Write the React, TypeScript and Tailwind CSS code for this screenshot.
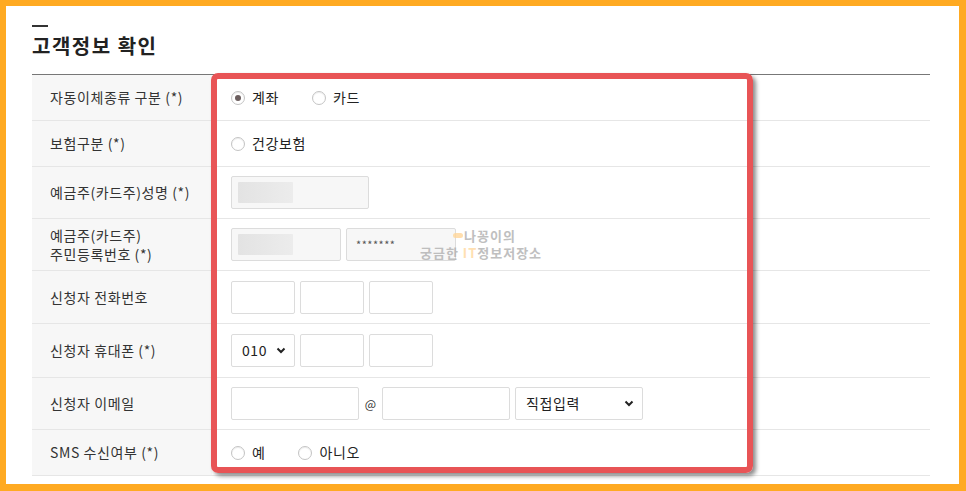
const FONT = { fontFamily: '"Noto Sans CJK KR", "Noto Sans", sans-serif' }

function Radio({ checked, label, gap }: { checked?: boolean; label: string; gap?: string }) {
  return (
    <label className={`flex items-center ${gap ?? ""}`}>
      <span className="w-[14px] h-[14px] rounded-full border border-[#c4c4c4] bg-white shadow-[inset_0_1px_1px_rgba(0,0,0,0.08)] flex items-center justify-center">
        {checked && <span className="w-[6px] h-[6px] rounded-full bg-[#6b5e5e]" />}
      </span>
      <span className="ml-[7px] text-[14px] tracking-[0.6px] text-[#222]">{label}</span>
    </label>
  )
}

function Input({ w, gray, children }: { w: string; gray?: boolean; children?: React.ReactNode }) {
  return (
    <div
      className={`${w} h-[33px] border border-[#dcdcdc] rounded-[2px] flex items-center ${
        gray ? "bg-[#f7f7f7]" : "bg-white"
      }`}
    >
      {children}
    </div>
  )
}

function Select({ w, value }: { w: string; value: string }) {
  return (
    <div className={`${w} h-[33px] border border-[#dcdcdc] rounded-[2px] bg-white flex items-center justify-between pl-[10px] pr-[8px]`}>
      <span className="text-[14px] tracking-[0.6px] text-[#222]">{value}</span>
      <svg width="10" height="7" viewBox="0 0 10 7">
        <path d="M1.5 1.5 L5 5 L8.5 1.5" fill="none" stroke="#222" strokeWidth="2" />
      </svg>
    </div>
  )
}

const Blur = () => <div className="ml-[6px] w-[55px] h-[21px] bg-[linear-gradient(90deg,#e3e3e3,#ececec)] rounded-[1px]" />

export default function App() {
  // 행 정보: 라벨, 높이, 내용
  const rows: { label: React.ReactNode; h: string; content: React.ReactNode }[] = [
    {
      label: "자동이체종류 구분 (*)",
      h: "h-[46px]",
      content: (
        <div className="flex items-center">
          <Radio checked label="계좌" />
          <Radio label="카드" gap="ml-[33px]" />
        </div>
      ),
    },
    { label: "보험구분 (*)", h: "h-[46px]", content: <Radio label="건강보험" /> },
    {
      label: "예금주(카드주)성명 (*)",
      h: "h-[52px]",
      content: (
        <Input w="w-[138px]" gray>
          <Blur />
        </Input>
      ),
    },
    {
      label: (
        <div className="leading-[19px]">
          예금주(카드주)
          <br />
          주민등록번호 (*)
        </div>
      ),
      h: "h-[52px]",
      content: (
        <div className="flex gap-[5px]">
          <Input w="w-[110px]" gray>
            <Blur />
          </Input>
          <Input w="w-[110px]" gray>
            <span className="ml-[9px] text-[11px] text-[#555] tracking-[0.5px]">*******</span>
          </Input>
        </div>
      ),
    },
    {
      label: "신청자 전화번호",
      h: "h-[53px]",
      content: (
        <div className="flex gap-[5px]">
          <Input w="w-[64px]" />
          <Input w="w-[64px]" />
          <Input w="w-[64px]" />
        </div>
      ),
    },
    {
      label: "신청자 휴대폰 (*)",
      h: "h-[54px]",
      content: (
        <div className="flex gap-[5px]">
          <Select w="w-[64px]" value="010" />
          <Input w="w-[64px]" />
          <Input w="w-[64px]" />
        </div>
      ),
    },
    {
      label: "신청자 이메일",
      h: "h-[52px]",
      content: (
        <div className="flex items-center">
          <Input w="w-[128px]" />
          <span className="w-[23px] text-center text-[12px] text-[#333]">@</span>
          <Input w="w-[128px]" />
          <div className="ml-[5px]">
            <Select w="w-[128px]" value="직접입력" />
          </div>
        </div>
      ),
    },
    {
      label: "SMS 수신여부 (*)",
      h: "h-[46px]",
      content: (
        <div className="flex items-center">
          <Radio label="예" />
          <Radio label="아니오" gap="ml-[33px]" />
        </div>
      ),
    },
  ]

  return (
    <div style={FONT} className="w-[966px] h-[491px] bg-[#ffaa22] pt-[6px] pl-[6px] pr-[7px] pb-[7px]">
      <div className="w-full h-full bg-white pl-[26px] pr-[29px] pt-[19px]">
        <div className="w-[16px] h-[2px] bg-[#333]" />
        <h1 className="mt-[7px] text-[20px] tracking-[1.5px] font-bold text-[#222] leading-[24px]">고객정보 확인</h1>

        <div className="relative mt-[16px] border-t border-[#777]">
          {rows.map((r, i) => (
            <div key={i} className={`flex ${r.h} border-b border-[#e6e6e6]`}>
              <div className="w-[180px] bg-[#f7f7f7] pl-[18px] flex items-center text-[14px] tracking-[0.6px] text-[#333]">
                {r.label}
              </div>
              <div className="flex-1 pl-[19px] flex items-center">{r.content}</div>
            </div>
          ))}

          {/* 워터마크 */}
          <div className="absolute left-[388px] top-[152px] pointer-events-none font-bold text-[13px] tracking-[1px] leading-[17px] text-[#b0b0b0] opacity-80">
            <div className="flex items-center pl-[33px]">
              <span className="w-[10px] h-[5px] rounded-full bg-[#ffd79a] mr-[1px]" />
              나꽁이의
            </div>
            <div>
              궁금한 <span className="text-[#ffd9a0]">IT</span>정보저장소
            </div>
          </div>

          {/* 빨간 강조 박스 */}
          <div className="absolute left-[179px] top-[-2px] w-[542px] h-[400px] border-[6px] border-[#e85456] rounded-[7px] shadow-[3px_3px_4px_rgba(0,0,0,0.45)] pointer-events-none" />
        </div>
      </div>
    </div>
  )
}
